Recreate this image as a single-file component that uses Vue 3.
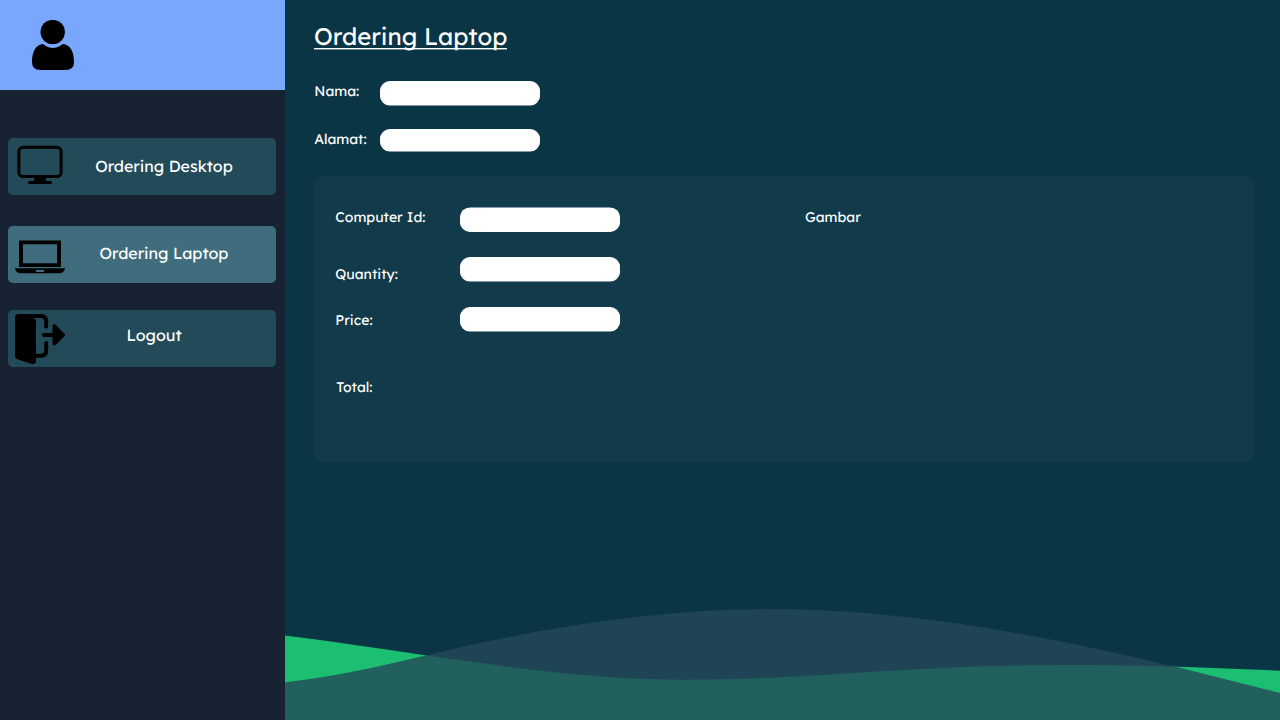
<script setup>
const items = [
  { id: 'desktop', label: 'Ordering Desktop' },
  { id: 'laptop', label: 'Ordering Laptop', active: true },
  { id: 'logout', label: 'Logout' },
]
const customer = [
  { id: 'nama', label: 'Nama:' },
  { id: 'alamat', label: 'Alamat:' },
]
const order = [
  { id: 'computer', label: 'Computer Id:' },
  { id: 'quantity', label: 'Quantity:' },
  { id: 'price', label: 'Price:' },
]
</script>

<template>
  <div class="app">
    <aside class="sidebar">
      <header class="profile">
        <svg class="avatar" viewBox="0 0 42 50">
          <circle cx="20.700" cy="12" r="12.200" />
          <path d="M10.500 24C3 25 0 33 0 42Q0 50 8.500 50H33.500Q42 50 42 42C42 33 39 25 31.500 24C30 24 29 25 28 26Q20.700 30.200 13.800 26C12.500 25 12 24 10.500 24Z" />
        </svg>
      </header>
      <nav class="menu">
        <button v-for="item in items" :key="item.id" :class="['item', item.id, { active: item.active }]">
          <svg v-if="item.id === 'desktop'" class="icon" viewBox="0 0 50 57">
            <rect x="3.900" y="9.300" width="42.200" height="29.200" rx="4" fill="none" stroke="#000" stroke-width="3" />
            <path d="M20.500 39H30L31.500 43H35.500Q37 43 37 44.500T35.500 46H14.500Q13 46 13 44.500T14.500 43H18.500Z" />
          </svg>
          <svg v-else-if="item.id === 'laptop'" class="icon" viewBox="0 0 50 57">
            <path fill-rule="evenodd" d="M4 14.500H46V41H4ZM8 18.300V37.200H42V18.300Z" />
            <path fill-rule="evenodd" d="M0 42.300H50C49.500 45.500 47.500 47.300 44 47.300H6C2.500 47.300 .5 45.500 0 42.300ZM21 44V46H29V44Z" />
          </svg>
          <svg v-else class="icon" viewBox="0 0 50 57">
            <path d="M3.500 4H16L17 7.200Q21 8.500 21 12V51Q21 54.500 17 54L3 49.500Q0 48.500 0 45.500V7.500Q0 4 3.500 4Z" />
            <path class="stroke" d="M8 6H26Q31.200 6 31.200 11.500V16.500M31.200 33V40.500Q31.200 45.800 26 45.800H20M29 25H41" />
            <path d="M37.500 16.500Q37.500 12.500 41 15L49.500 24Q50.500 25 49.500 26L41 34.700Q37.500 37 37.500 33Z" />
          </svg>
          <span class="label">{{ item.label }}</span>
        </button>
      </nav>
    </aside>

    <main class="content">
      <h1 class="title"><span>Ordering Laptop</span></h1>
      <form class="customer">
        <label v-for="f in customer" :key="f.id" :class="['row', f.id]">
          <span class="caption">{{ f.label }}</span>
          <input type="text" />
        </label>
      </form>
      <section class="card">
        <div class="fields">
          <label v-for="f in order" :key="f.id" :class="['row', f.id]">
            <span class="caption">{{ f.label }}</span>
            <input type="text" />
          </label>
          <div class="row total"><span class="caption">Total:</span></div>
        </div>
        <div class="picture">Gambar</div>
      </section>
      <svg class="waves" viewBox="0 600 995 120">
        <path fill="#1cbe72" d="M0 635.500C47 641 93 648.500 140 655.300C227 667.500 310 679.800 400 679.800C530 679.800 620 665 785 665C850 664.900 920 667.300 995 670.700V720H0Z" />
        <path fill="#244959" fill-opacity=".8" d="M0 682.200C50 677 95 666 142 655.200C257 627.400 370 609 485 609C620 609 757 635 892 667L995 693V720H0Z" />
      </svg>
    </main>
  </div>
</template>

<style>
body { margin: 0; }
</style>

<style scoped>
.app {
  display: flex;
  width: 1280px;
  height: 720px;
  overflow: hidden;
  background: #0a3545;
  color: #fff;
  font-family: Lexend, Lato, "Open Sans", sans-serif;
  text-rendering: geometricPrecision;
}
.sidebar { width: 285px; flex: none; background: #172332; }
.profile { height: 90px; box-sizing: border-box; padding: 20px 32px; background: #78a7fd; }
.avatar { display: block; width: 42px; height: 50px; }
.menu { display: flex; flex-direction: column; padding: 48px 9px 0 8px; }
.item {
  display: flex;
  align-items: center;
  height: 57px;
  padding: 0 0 0 7px;
  border: 0;
  border-radius: 5px;
  background: #234a59;
  color: #fff;
  font: 16px/20px Lexend, Lato, "Open Sans", sans-serif;
  text-rendering: geometricPrecision;
}
.item.laptop { margin: 31px 0 27px; }
.item.active { background: #3f6d7d; }
.icon { flex: none; width: 50px; height: 57px; }
.stroke { fill: none; stroke: #000; stroke-width: 4; stroke-linecap: round; stroke-linejoin: round; }
.label { width: 198px; padding-bottom: 1px; text-align: center; white-space: nowrap; transform: translateY(-.1px); }
.laptop .label { padding-bottom: 3px; }
.logout .label { width: 178px; padding-bottom: 7px; }

.content { display: flex; flex-direction: column; width: 995px; }
.title { height: 31px; margin: 21px 0 0 29px; font-size: 24px; font-weight: 400; line-height: 31px; white-space: nowrap; }
.title span { display: inline-block; height: 27px; border-bottom: 1px solid #fff; box-shadow: 0 .4px 0 #fff; }
.customer { display: flex; flex-direction: column; gap: 23px; margin: 29px 0 0 29px; }
.row { display: flex; align-items: flex-start; font-size: 14px; line-height: 20px; white-space: nowrap; }
.caption { width: 66px; transform: translate(.3px, .3px); }
input { box-sizing: border-box; width: 160px; height: 24px; padding: 0 10px; border: 0; border-radius: 10px; background: #fff; outline: 0; box-shadow: 0 .6px 0 #fff; }
.customer .row { height: 25px; }
.alamat input { height: 22px; }
.card { display: flex; box-sizing: border-box; width: 940px; height: 286px; margin: 22px 0 0 29px; padding: 31px 21px 0; border-radius: 10px; background: #113b4a; }
.fields { width: 470px; }
.fields .row { height: 50px; }
.fields .caption { width: 125px; }
.computer input { margin-top: 1px; box-shadow: 0 -.6px 0 #fff; }
.quantity .caption { padding-top: 7px; }
.price .caption { padding-top: 3px; }
.fields .total { padding-top: 20px; }
.total .caption { text-indent: 1px; }
.picture { font-size: 14px; line-height: 20px; transform: translateY(.3px); }
.waves { display: block; width: 995px; height: 120px; margin-top: auto; }
</style>
